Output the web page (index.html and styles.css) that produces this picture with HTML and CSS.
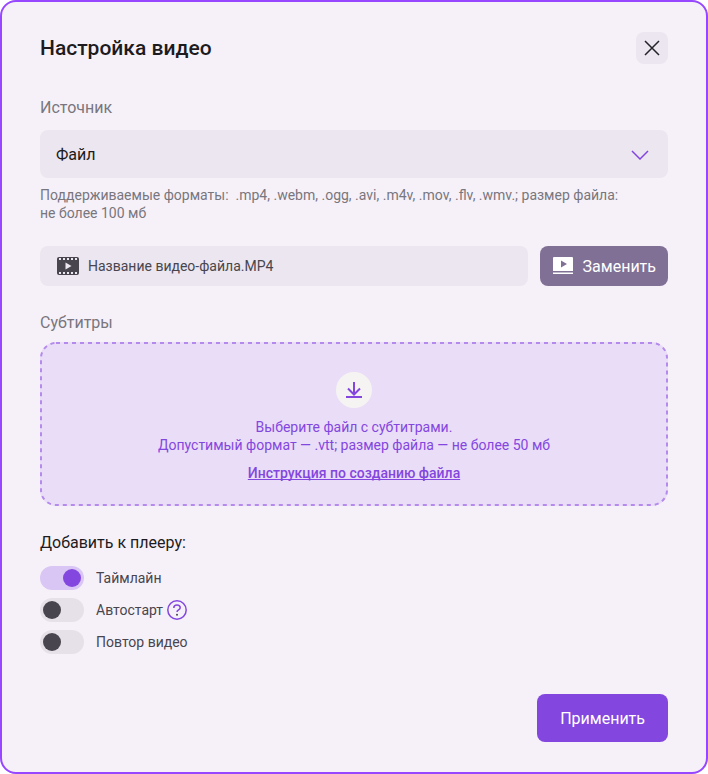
FILE: index.html
```html
<!DOCTYPE html>
<html lang="ru">
<head>
    <meta charset="UTF-8">
    <meta name="viewport" content="width=device-width, initial-scale=1.0">
    <title>Настройка видео</title>
    <link rel="stylesheet" href="styles.css">
</head>
<body>
    <form class="dialog">
        <header class="header">
            <h1>Настройка видео</h1>
            <button type="button" class="close" aria-label="Закрыть">
                <svg width="16" height="16" viewBox="0 0 16 16" fill="none" stroke="#25232a" stroke-width="1.5">
                    <path d="M1 1l14 14M15 1L1 15"/>
                </svg>
            </button>
        </header>

        <label class="caption" for="source">Источник</label>
        <div class="select">
            <select id="source">
                <option>Файл</option>
                <option>Ссылка</option>
            </select>
            <svg class="chevron" width="18" height="10" viewBox="0 0 18 10" fill="none" stroke="#8347df" stroke-width="1.5">
                <path d="M1 1l8 8 8-8"/>
            </svg>
        </div>
        <p class="hint">Поддерживаемые форматы: &nbsp;.mp4, .webm, .ogg, .avi, .m4v, .mov, .flv, .wmv.; размер файла:<br>не более 100 мб</p>

        <div class="file-row">
            <div class="file">
                <svg width="24" height="20" viewBox="0 0 24 20">
                    <rect x="1" y="1" width="22" height="18" rx="2" fill="#48454e"/>
                    <path d="M3 3h18M3 17h18" stroke="#ece6f0" stroke-width="2" stroke-dasharray="2 2"/>
                    <path d="M9.5 6.5v7l6-3.5z" fill="#ece6f0"/>
                </svg>
                <span>Название видео-файла.MP4</span>
            </div>
            <button type="button" class="replace">
                <svg width="20" height="18" viewBox="0 0 20 18">
                    <path fill="#fff" fill-rule="evenodd" d="M1 0h18a1 1 0 0 1 1 1v13H0V1a1 1 0 0 1 1-1zM8 3.5v7l6-3.500z"/>
                    <path fill="#fff" d="M0 15.500h20V17H0z"/>
                </svg>
                Заменить
            </button>
        </div>

        <label class="caption" for="subtitles">Субтитры</label>
        <div class="dropzone">
            <svg class="dashes"><rect class="dashes-line" x="1" y="1" rx="15"/></svg>
            <input type="file" id="subtitles" class="file-input" accept=".vtt">
            <label class="drop-label" for="subtitles">
                <span class="drop-icon">
                    <svg width="18" height="18" viewBox="0 0 18 18" fill="none" stroke="#8347df" stroke-width="2">
                        <path d="M9 1v13M3 7.5l6 6 6-6M1 16h16"/>
                    </svg>
                </span>
                Выберите файл с субтитрами.<br>Допустимый формат — .vtt; размер файла — не более 50 мб
            </label>
            <a class="guide" href="#">Инструкция по созданию файла</a>
        </div>

        <h2>Добавить к плееру:</h2>
        <div class="toggles">
            <div class="toggle">
                <input type="checkbox" id="timeline" checked>
                <label for="timeline">Таймлайн</label>
            </div>
            <div class="toggle">
                <input type="checkbox" id="autostart">
                <label for="autostart">Автостарт</label>
                <button type="button" class="help" aria-label="Справка">
                    <svg width="20" height="20" viewBox="0 0 20 20" fill="none" stroke="#8347df" stroke-width="1.5">
                        <circle cx="10" cy="10" r="9.2"/>
                        <path d="M6.8 8c0-1.900 1.400-3 3.200-3s3.200 1.100 3.200 2.800c0 2.100-3.200 2.200-3.200 4.200"/>
                        <circle cx="10" cy="14.700" r="1" fill="#48454e" stroke="none"/>
                    </svg>
                </button>
            </div>
            <div class="toggle">
                <input type="checkbox" id="repeat">
                <label for="repeat">Повтор видео</label>
            </div>
        </div>

        <button type="submit" class="apply">Применить</button>
    </form>
</body>
</html>
```
FILE: styles.css
```css
* {
    box-sizing: border-box;
}
body {
    margin: 0;
    background-color: #fff;
    font-family: Roboto, sans-serif;
    font-size: 14px;
    line-height: 18px;
    color: #48454e;
}
button, select {
    font-family: inherit;
    border: none;
    border-radius: 8px;
    cursor: pointer;
}
svg {
    display: block;
    flex-shrink: 0;
}
.dialog {
    display: flex;
    flex-direction: column;
    min-height: 100vh;
    padding: 30px 38px;
    border: 2px solid #9747ff;
    border-radius: 16px;
    background-color: #f6f1f9;
}
.header {
    display: flex;
    justify-content: space-between;
    align-items: center;
    margin-bottom: 32px;
}
h1 {
    margin: 0;
    font-size: 21px;
    line-height: 32px;
    font-weight: 500;
    color: #1d1b20;
}
.close {
    display: flex;
    justify-content: center;
    align-items: center;
    width: 32px;
    height: 32px;
    padding: 0;
    background-color: #ebe6ef;
}
.caption {
    align-self: flex-start;
    font-size: 16px;
    line-height: 24px;
    color: #79767d;
}
.select {
    position: relative;
    margin-top: 10px;
}
.select select {
    display: block;
    width: 100%;
    height: 48px;
    padding: 0 16px;
    appearance: none;
    background-color: #ebe6ef;
    font-size: 16px;
    color: #1d1b20;
}
.chevron {
    position: absolute;
    right: 19px;
    top: 20px;
    pointer-events: none;
}
.hint {
    margin: 8px 0 24px;
    color: #79767d;
}
.file-row {
    display: flex;
    gap: 12px;
    margin-bottom: 25px;
}
.file {
    display: flex;
    flex: 1;
    align-items: center;
    gap: 8px;
    height: 40px;
    padding: 0 16px;
    border-radius: 8px;
    background-color: #ebe6ef;
}
.replace {
    display: flex;
    align-items: center;
    gap: 10px;
    padding: 0 12px 0 13px;
    background-color: #807096;
    font-size: 16px;
    color: #fff;
}
.dropzone {
    position: relative;
    display: flex;
    flex-direction: column;
    align-items: center;
    gap: 10px;
    margin: 7px 0 25px;
    padding: 30px 16px 24px;
    border-radius: 16px;
    background-color: #eaddf7;
    text-align: center;
    color: #8347df;
}
.dashes {
    position: absolute;
    top: 0;
    left: 0;
    width: 100%;
    height: 100%;
    pointer-events: none;
}
.dashes-line {
    width: calc(100% - 2px);
    height: calc(100% - 2px);
    fill: none;
    stroke: #b48aec;
    stroke-width: 2px;
    stroke-dasharray: 4 4;
}
.file-input {
    position: absolute;
    width: 1px;
    height: 1px;
    opacity: 0;
}
.drop-label {
    cursor: pointer;
}
.drop-icon {
    display: flex;
    justify-content: center;
    align-items: center;
    width: 36px;
    height: 36px;
    margin: 0 auto 10px;
    border-radius: 50%;
    background-color: #f6f4f3;
}
.guide {
    font-weight: 500;
    color: #8347df;
    text-decoration-thickness: 1px;
    text-decoration-skip-ink: none;
}
h2 {
    margin: 0 0 11px;
    font-size: 16px;
    line-height: 24px;
    font-weight: 400;
    color: #1d1b20;
}
.toggles {
    display: flex;
    flex-direction: column;
    gap: 8px;
}
.toggle {
    display: flex;
    align-items: center;
    height: 24px;
}
.toggle input {
    display: flex;
    align-items: center;
    width: 44px;
    height: 24px;
    margin: 0 12px 0 0;
    padding: 0 3px;
    appearance: none;
    border-radius: 12px;
    background-color: #e6e0e9;
    cursor: pointer;
}
.toggle input::before {
    content: "";
    width: 18px;
    height: 18px;
    border-radius: 50%;
    background-color: #48454e;
}
.toggle input:checked {
    justify-content: flex-end;
    background-color: #d9c6f4;
}
.toggle input:checked::before {
    background-color: #8347df;
}
.help {
    margin-left: 4px;
    padding: 0;
    background: none;
}
.apply {
    align-self: flex-end;
    height: 48px;
    margin-top: 40px;
    padding: 0 23px;
    background-color: #8347df;
    font-size: 16px;
    color: #fff;
}
```
